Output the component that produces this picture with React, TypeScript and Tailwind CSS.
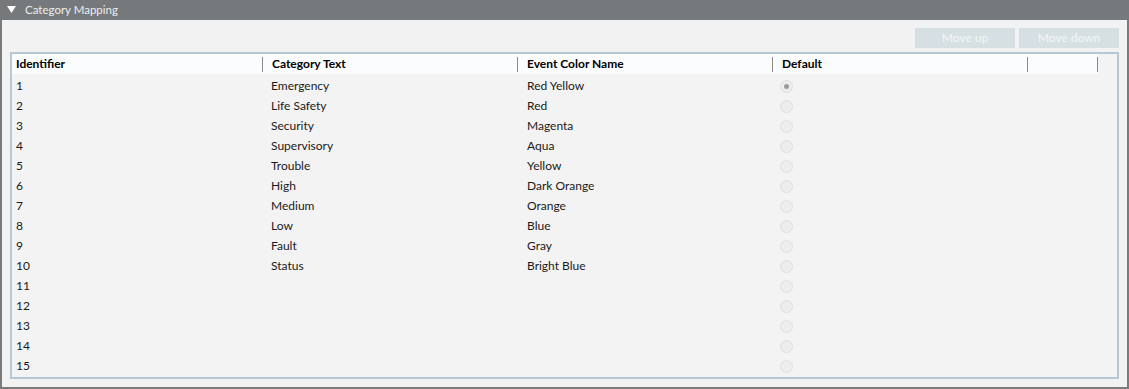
import React from "react";

const rows: [string, string, string][] = [
  ["1", "Emergency", "Red Yellow"],
  ["2", "Life Safety", "Red"],
  ["3", "Security", "Magenta"],
  ["4", "Supervisory", "Aqua"],
  ["5", "Trouble", "Yellow"],
  ["6", "High", "Dark Orange"],
  ["7", "Medium", "Orange"],
  ["8", "Low", "Blue"],
  ["9", "Fault", "Gray"],
  ["10", "Status", "Bright Blue"],
  ["11", "", ""],
  ["12", "", ""],
  ["13", "", ""],
  ["14", "", ""],
  ["15", "", ""],
];

function Radio({ checked }: { checked?: boolean }) {
  return (
    <div className="w-[13px] h-[13px] rounded-full border border-[#dcdfe0] bg-[#ededed] flex items-center justify-center">
      {checked && <div className="w-[5px] h-[5px] rounded-full bg-[#9b9b9b]" />}
    </div>
  );
}

function HeaderCell({ label, w, first }: { label: string; w: string; first?: boolean }) {
  return (
    <div className={`${w} h-full flex items-center shrink-0`}>
      {!first && <div className="w-px h-[15px] bg-[#8a8a8a]" />}
      <span className={first ? "pl-[4px]" : "pl-[9px]"}>{label}</span>
    </div>
  );
}

export default function App() {
  return (
    <div
      className="w-[1129px] h-[389px] bg-[#f2f2f2] text-[12px] text-black"
      style={{ fontFamily: 'Lato, "Open Sans", sans-serif' }}
    >
      <div className="h-[20px] bg-[#76797b] flex items-center text-[#eceeef]">
        <svg width="9" height="8" viewBox="0 0 9 8" className="ml-[7px] mr-[9px]">
          <polygon points="0,0 9,0 4.5,7" fill="#ffffff" />
        </svg>
        <span className="leading-none text-[11.5px]">Category Mapping</span>
      </div>
      <div className="h-[369px] border-l-2 border-b-2 border-r-2 border-[#7b7b7b] pt-[8px] pl-[8px] pr-[8px]">
        <div className="flex justify-end gap-[4px]">
          <div className="w-[100px] h-[20px] bg-[#d6e0e3] text-[#f3f6f7] flex items-center justify-center">
            Move up
          </div>
          <div className="w-[100px] h-[20px] bg-[#d6e0e3] text-[#f3f6f7] flex items-center justify-center">
            Move down
          </div>
        </div>
        <div className="mt-[4px] w-[1109px] h-[327px] border-2 border-[#b9c7d2] bg-[#f3f3f3] flex flex-col">
          <div className="h-[20px] w-[1086px] bg-[#fbfcfd] flex items-center font-bold">
            <HeaderCell label="Identifier" w="w-[250px]" first />
            <HeaderCell label="Category Text" w="w-[255px]" />
            <HeaderCell label="Event Color Name" w="w-[255px]" />
            <HeaderCell label="Default" w="w-[255px]" />
            <div className="w-[71px] h-full flex items-center justify-between shrink-0">
              <div className="w-px h-[15px] bg-[#8a8a8a]" />
              <div className="w-px h-[15px] bg-[#8a8a8a]" />
            </div>
          </div>
          <div className="mt-[2px] flex flex-col">
            {rows.map(([id, cat, color], i) => (
              <div key={id} className="h-[20px] flex items-center text-[#1a1a1a]">
                <div className="w-[250px] pl-[4px] shrink-0">{id}</div>
                <div className="w-[255px] pl-[9px] shrink-0">{cat}</div>
                <div className="w-[255px] pl-[10px] shrink-0">{color}</div>
                <div className="w-[255px] pl-[8px] shrink-0 flex items-center h-full pt-[1px]">
                  <Radio checked={i === 0} />
                </div>
              </div>
            ))}
          </div>
        </div>
      </div>
    </div>
  );
}
